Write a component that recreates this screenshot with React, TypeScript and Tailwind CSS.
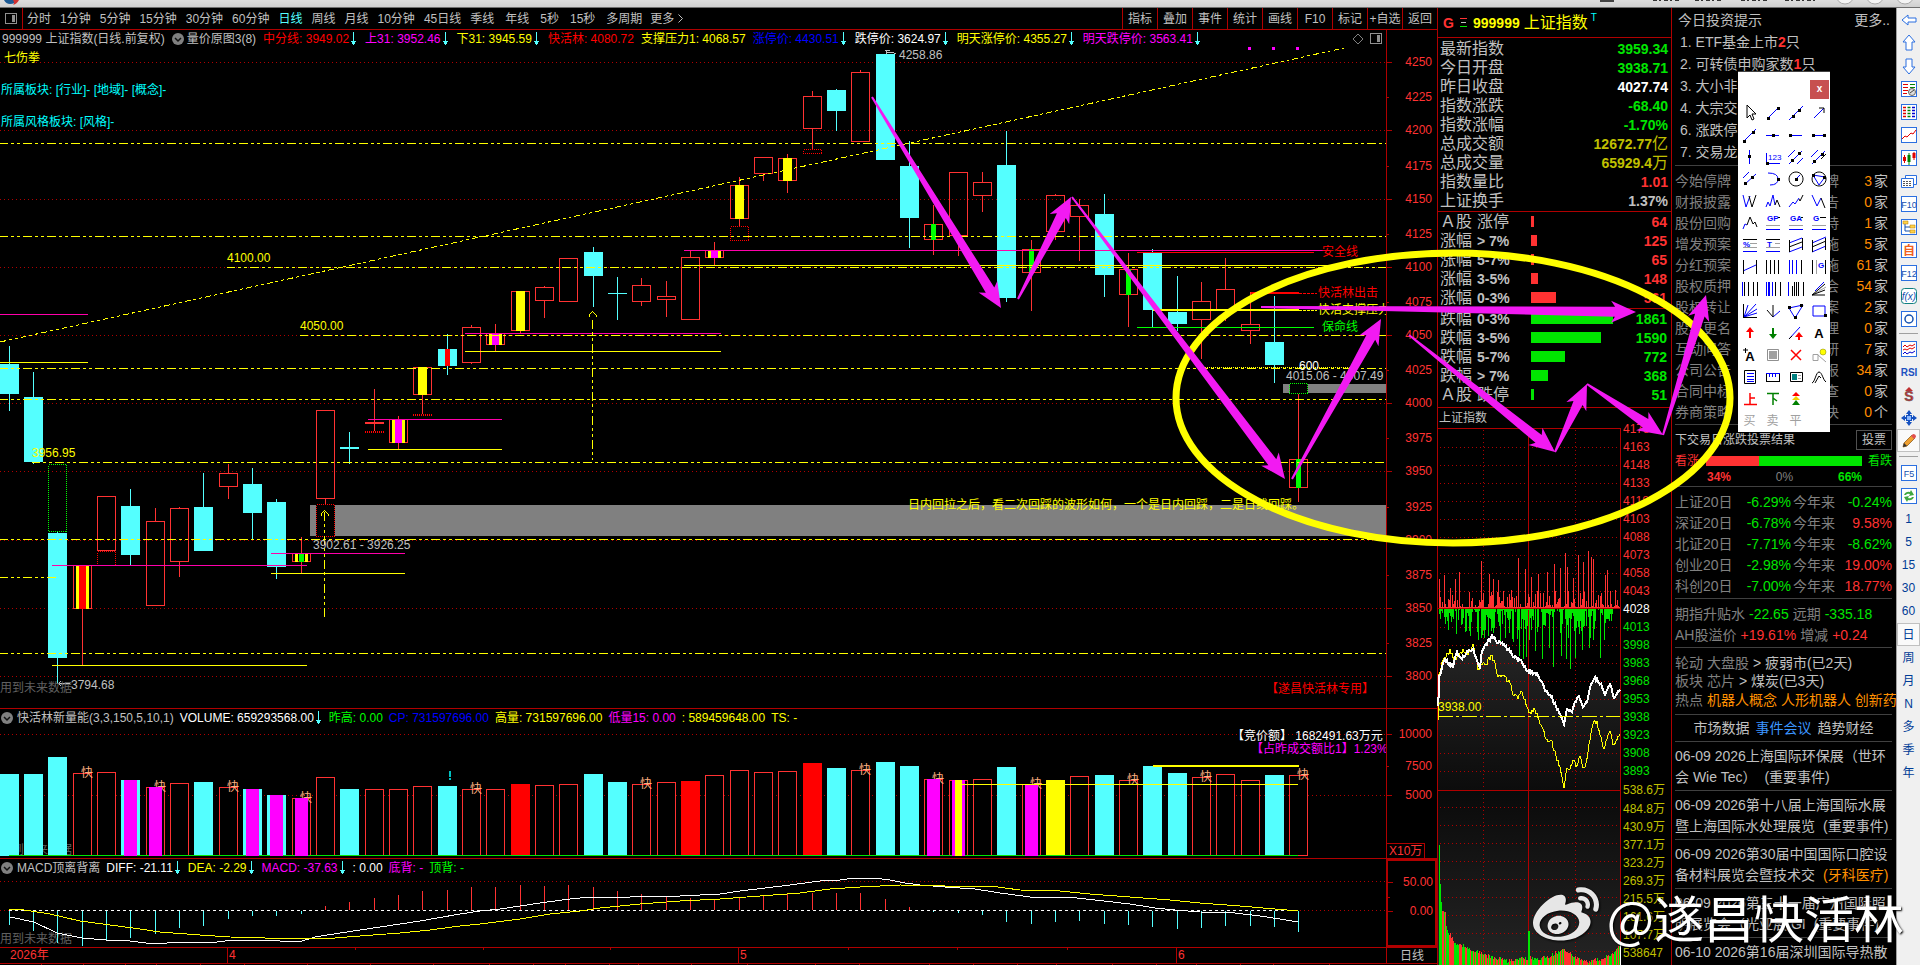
import type { ReactNode } from "react";
import { FaWeibo } from "react-icons/fa";

const FONT = "font-['Liberation_Sans','Noto_Sans_CJK_SC',sans-serif]";

const RED = "#ff3232";
const GRID = "#b00000";
const CYAN = "#54ffff";
const YELLOW = "#ffff00";
const MAGENTA = "#ff00ff";
const PINK = "#ff00aa";
const GREEN = "#00ff00";

// left edge of the i-th bar
const barX = (i: number) => Math.floor(i * 24.3333 + 0.1);

const noise = (n: number) => {
  const v = Math.sin(n * 127.1) * 43758.5453;
  return v - Math.floor(v);
};

type Inner = [color: string, from: number, to: number];
type Candle = {
  t: "c" | "r";
  o: number;
  c: number;
  h?: number;
  l?: number;
  inner?: Inner[];
};

const YMY: Inner[] = [[YELLOW, 3, 16], [MAGENTA, 6, 13]];
const YEL: Inner[] = [[YELLOW, 5, 14]];
const GRN: Inner[] = [[GREEN, 7, 12]];

const candles: Candle[] = [
  { t: "c", o: 364, c: 394, h: 346, l: 411 },
  { t: "c", o: 397, c: 462, h: 372, l: 464 },
  { t: "c", o: 533, c: 658, h: 531, l: 684 },
  { t: "r", o: 565, c: 609, l: 665, inner: [[YELLOW, 3, 16], ["#ff0000", 6, 13]] },
  { t: "r", o: 496, c: 551 },
  { t: "c", o: 506, c: 555, h: 489, l: 565 },
  { t: "r", o: 521, c: 606, h: 508 },
  { t: "r", o: 508, c: 562, h: 507, l: 577 },
  { t: "c", o: 507, c: 551, h: 473 },
  { t: "r", o: 473, c: 487, h: 464, l: 499 },
  { t: "c", o: 484, c: 513, h: 468, l: 540 },
  { t: "c", o: 502, c: 567, h: 499, l: 579 },
  { t: "r", o: 553, c: 562, h: 537, l: 573, inner: [[YELLOW, 3, 6], [GREEN, 7, 12], [YELLOW, 13, 16]] },
  { t: "r", o: 410, c: 499, l: 504 },
  { t: "c", o: 447, c: 449, h: 432, l: 464 },
  { t: "r", o: 422, c: 424, h: 389, l: 431 },
  { t: "r", o: 419, c: 443, h: 416, l: 449, inner: YMY },
  { t: "r", o: 367, c: 395, l: 414, inner: YEL },
  { t: "c", o: 349, c: 366, h: 334, l: 375, inner: [["#ff0000", 7, 12]] },
  { t: "r", o: 327, c: 363, h: 325, l: 364 },
  { t: "r", o: 333, c: 345, h: 324, l: 351, inner: YMY },
  { t: "r", o: 291, c: 331, l: 333, inner: YEL },
  { t: "r", o: 287, c: 301, h: 286, l: 318 },
  { t: "r", o: 258, c: 302 },
  { t: "c", o: 252, c: 276, h: 247, l: 307 },
  { t: "c", o: 293, c: 294, h: 277, l: 320 },
  { t: "r", o: 285, c: 302, h: 278, l: 306 },
  { t: "r", o: 296, c: 300, h: 281, l: 317 },
  { t: "r", o: 257, c: 320, h: 250 },
  { t: "r", o: 250, c: 258, h: 242, l: 265, inner: YMY },
  { t: "r", o: 185, c: 219, h: 177, l: 226, inner: YEL },
  { t: "r", o: 157, c: 174, l: 181 },
  { t: "r", o: 158, c: 181, h: 154, l: 193, inner: YEL },
  { t: "r", o: 96, c: 129, h: 91, l: 149 },
  { t: "c", o: 90, c: 111, h: 89, l: 131 },
  { t: "r", o: 72, c: 142, h: 70 },
  { t: "c", o: 54, c: 160 },
  { t: "c", o: 166, c: 218, h: 141, l: 248 },
  { t: "r", o: 224, c: 240, h: 205, l: 255, inner: GRN },
  { t: "r", o: 172, c: 236, l: 256 },
  { t: "r", o: 182, c: 196, h: 172, l: 212 },
  { t: "c", o: 165, c: 298, h: 131, l: 302 },
  { t: "r", o: 249, c: 273, h: 240, l: 311, inner: GRN },
  { t: "r", o: 195, c: 232, h: 194, l: 240 },
  { t: "r", o: 205, c: 217, h: 199, l: 261 },
  { t: "c", o: 214, c: 275, h: 194, l: 297 },
  { t: "r", o: 269, c: 295, h: 253, l: 327, inner: GRN },
  { t: "c", o: 253, c: 310, h: 249, l: 327 },
  { t: "c", o: 312, c: 324, h: 276, l: 331 },
  { t: "r", o: 301, c: 320, h: 282, l: 359 },
  { t: "r", o: 289, c: 311, h: 258, l: 321 },
  { t: "r", o: 324, c: 331, h: 292, l: 344 },
  { t: "c", o: 342, c: 365, h: 296, l: 383 },
  { t: "r", o: 459, c: 488, h: 394, l: 502, inner: GRN },
];

// kind: c cyan, r hollow, R red, Y yellow; m adds the magenta core
const volumes: [string, number][] = [
  ["c", 774], ["c", 774], ["c", 757], ["r", 773], ["r", 772], ["cm", 780], ["rm", 787], ["r", 783], ["c", 782],
  ["r", 787], ["cm", 789], ["cm", 795], ["rm", 798], ["r", 777], ["c", 789], ["r", 789], ["r", 789], ["r", 786],
  ["c", 786], ["r", 789], ["r", 789], ["R", 784], ["r", 785], ["r", 784], ["c", 774], ["c", 782], ["r", 784],
  ["r", 782], ["R", 781], ["r", 775], ["r", 770], ["r", 772], ["r", 771], ["R", 763], ["c", 768], ["r", 770],
  ["c", 762], ["c", 766], ["rm", 779], ["rmy", 780], ["r", 779], ["c", 767], ["rm", 784], ["Y", 780], ["r", 776],
  ["c", 775], ["r", 780], ["c", 766], ["c", 773], ["r", 777], ["r", 774], ["r", 780], ["c", 775], ["r", 775],
];

const quickMarks: [number, number][] = [
  [81, 773], [154, 787], [227, 787], [300, 798], [470, 789], [640, 784],
  [859, 770], [932, 779], [1030, 784], [1127, 780], [1200, 777], [1297, 775],
];

const macdEnds = [
  925, 931, 943, 946, 940, 938, 934, 928, 926, 919, 916, 916, 914, 906, 902, 898, 895, 891, 890, 887, 887, 885, 886,
  885, 887, 891, 894, 897, 898, 899, 897, 895, 894, 893, 893, 893, 899, 907, 912, 913, 915, 922, 924, 922, 921, 924,
  925, 927, 929, 928, 926, 926, 927, 932,
];

const diffLine =
  "10,917 34,922 57,933 82,938 106,940 130,941 146,943 167,943 180,942 210,943 225,941 250,940 280,941 302,941 315,937 340,933 380,927 420,921 460,914 480,911 500,909 540,903 570,899 590,897 630,897 640,896 680,896 720,894 740,891 790,885 820,881 840,880 855,878 873,878 890,880 905,883 920,885 945,887 960,888 975,889 1000,893 1030,897 1068,897 1095,900 1130,904 1155,908 1175,910 1200,912 1235,913 1260,916 1280,919 1298,922";
const deaLine =
  "9,909 24,910 50,914 80,921 110,925 140,929 160,932 200,935 230,937 265,938 335,938 360,936 400,933 430,930 460,926 480,924 520,919 550,914 580,911 600,908 640,904 680,901 720,899 760,896 800,893 830,889 860,887 900,885 945,886 990,886 1020,890 1060,891 1090,894 1130,897 1170,900 1200,903 1240,906 1275,909 1298,911";

function Label({ x, y, fill, children, end }: { x: number; y: number; fill: string; children: ReactNode; end?: boolean }) {
  return (
    <text x={x} y={y + 4} fill={fill} fontSize={12} textAnchor={end ? "end" : "start"} xmlSpace="preserve">
      {children}
    </text>
  );
}

function HLine({ x1, x2, y, color, h = 1 }: { x1: number; x2: number; y: number; color: string; h?: number }) {
  return <rect x={x1} y={y} width={x2 - x1} height={h} fill={color} />;
}

function Dotted({ y, x1 = 0, x2 = 1386 }: { y: number; x1?: number; x2?: number }) {
  return <line x1={x1} x2={x2} y1={y + 0.5} y2={y + 0.5} stroke={GRID} strokeDasharray="1 3" />;
}

function DashDot({ y, x1 = 0, x2 = 1386 }: { y: number; x1?: number; x2?: number }) {
  return <line x1={x1} x2={x2} y1={y + 0.5} y2={y + 0.5} stroke={YELLOW} strokeDasharray="9 3 3 3 3 3" strokeDashoffset={1} />;
}

function DownArrow() {
  return (
    <svg className="ml-[2px] mr-[2px] h-[13px] w-[5px] shrink-0" viewBox="0 0 5 13" shapeRendering="crispEdges">
      <path d="M2 0h1v13h-1zM0 9h5v1h-5zM1 10h3v2h-3z" fill={CYAN} />
    </svg>
  );
}

function Chevron() {
  return (
    <svg className="h-3 w-3 shrink-0" viewBox="0 0 12 12">
      <circle cx="6" cy="6" r="6" fill="#808080" />
      <path d="M3 5l3 3 3-3" fill="none" stroke="#111" strokeWidth="1.5" />
    </svg>
  );
}

function Field({ color, arrow, children }: { color: string; arrow?: boolean; children: ReactNode }) {
  return (
    <span className="flex shrink-0 items-center whitespace-pre" style={{ color }}>
      {children}
      {arrow && <DownArrow />}
    </span>
  );
}

function PanelIcon() {
  return (
    <svg className="h-[11px] w-3" viewBox="0 0 12 11" shapeRendering="crispEdges">
      <rect x="0.5" y="0.5" width="11" height="10" rx="1" fill="none" stroke="#909090" />
      <path d="M7 2h3v7H7z" fill="#909090" />
    </svg>
  );
}

const periodsA = ["分时", "1分钟", "5分钟", "15分钟", "30分钟", "60分钟", "日线", "周线", "月线", "10分钟", "45日线"];
const periodsB = ["季线", "年线", "5秒", "15秒", "多周期"];
const tools = ["指标", "叠加", "事件", "统计", "画线", "F10", "标记", "+自选", "返回"];

function Toolbar() {
  return (
    <nav className="flex h-[22px] shrink-0 items-center border-b border-[#b00000] text-[#c0c0c0]">
      <button className="flex h-full w-[23px] items-center justify-center border-r border-[#b00000]" aria-label="侧栏">
        <PanelIcon />
      </button>
      <div className="flex gap-[9px] pl-1">
        {periodsA.map((p) => (
          <button key={p} className={p === "日线" ? "text-[#54ffff]" : ""}>{p}</button>
        ))}
      </div>
      <div className="flex gap-[11px] pl-[9px]">
        {periodsB.map((p) => (
          <button key={p}>{p}</button>
        ))}
      </div>
      <button className="flex items-center gap-1 pl-2">
        更多
        <svg className="h-[9px] w-[5px]" viewBox="0 0 5 9"><path d="M.5 .5l4 4-4 4" fill="none" stroke="#c0c0c0" /></svg>
      </button>
      <div className="ml-auto flex h-full">
        {tools.map((t) => (
          <button key={t} className="w-[35px] whitespace-nowrap border-l border-[#b00000] text-center">{t}</button>
        ))}
      </div>
    </nav>
  );
}

function MainChart() {
  return (
    <svg className="block w-full flex-1" shapeRendering="crispEdges">
      <g transform="translate(0,-47)">
        {[62, 130, 199, 267, 335, 403, 471, 540, 608, 676].map((y) => <Dotted key={y} y={y} />)}
        <rect x={310} y={505} width={1076} height={31} fill="#808080" />
        <rect x={1283} y={384} width={103} height={9} fill="#808080" />
        <rect x={316} y={504} width={19} height={33} fill="#000" />

        {candles.map((k, i) => {
          const x = barX(i);
          const top = k.h ?? k.o;
          const low = k.l ?? k.c;
          const color = k.t === "c" ? CYAN : RED;
          return (
            <g key={i}>
              <rect x={x + 9} y={top} width={1} height={k.o - top} fill={color} />
              <rect x={x + 9} y={k.c} width={1} height={low - k.c} fill={color} />
              {k.t === "c" ? (
                <rect x={x} y={k.o} width={19} height={k.c - k.o} fill={color} />
              ) : (
                <rect x={x + 0.5} y={k.o + 0.5} width={18} height={k.c - k.o - 1} fill="none" stroke={color} />
              )}
              {k.c - k.o < 3 && <rect x={x + 9} y={top} width={1} height={low - top} fill={color} />}
              {k.inner?.map(([c, a, b]) => (
                <rect key={c + a} x={x + a} y={k.o} width={b - a} height={k.c - k.o} fill={c} />
              ))}
            </g>
          );
        })}

        {/* gap boxes */}
        <g fill="none" strokeDasharray="1 1">
          <rect x={48.5} y={464.5} width={18} height={67} stroke={GREEN} />
          <rect x={1289.5} y={383.5} width={18} height={10} fill="#000" stroke={GREEN} />
          <g stroke="#ff0000">
            <rect x={97.5} y={551.5} width={18} height={14} />
            <rect x={316.5} y={504.5} width={18} height={32} />
            <rect x={730.5} y={226.5} width={18} height={14} />
            <rect x={803.5} y={149.5} width={18} height={4} />
            <path d="M365 431.5h19M365 432.5h19M413 414.5h19M413 415.5h19" />
          </g>
        </g>

        {[143, 236, 368, 399, 539, 653].map((y) => <DashDot key={y} y={y} />)}
        <DashDot y={267} x1={227} />
        <DashDot y={335} x1={300} />
        <DashDot y={462} x1={32} />
        <DashDot y={577} x2={56} />
        <path d="M0 342L1344 48" stroke={YELLOW} strokeDasharray="6 3 3 3 3 3" fill="none" />

        {[[0, 88, 314], [684, 1330, 250], [52, 307, 565], [271, 405, 553], [368, 502, 419], [465, 721, 333]].map(([a, b, y]) => (
          <HLine key={y} x1={a} x2={b} y={y} color={PINK} />
        ))}
        {[[0, 88, 362], [684, 1340, 265], [52, 307, 665], [271, 405, 573], [368, 502, 449], [465, 721, 351]].map(([a, b, y]) => (
          <HLine key={y} x1={a} x2={b} y={y} color={YELLOW} />
        ))}
        <HLine x1={1137} x2={1314} y={252} color="#ff0000" />
        <HLine x1={1251} x2={1299} y={292} h={2} color="#ff0000" />
        <HLine x1={1153} x2={1299} y={309} h={2} color={YELLOW} />
        <HLine x1={1137} x2={1314} y={327} color={GREEN} />
        <path d="M1299 293.5h18" stroke="#ff0000" strokeDasharray="3 1" />
        <path d="M1299 310.5h18" stroke={YELLOW} strokeDasharray="3 1" />
        <path d="M1205 367.5h145" stroke={YELLOW} strokeDasharray="1 1" />
        <path d="M324.5 512v108M592.5 320v140" stroke={YELLOW} strokeDasharray="9 3 3 3 3 3" />
        <path d="M321 516v-2l3.500-3.500 3.500 3.500v2M589 317v-2l3.500-3.500 3.500 3.500v2" stroke={YELLOW} fill="none" />
        {[1248, 1272, 1296].map((x) => <rect key={x} x={x} y={47} width={3} height={3} fill={MAGENTA} />)}
        <path d="M885 50h5M886 50v4M886 52h6l4 2M58 683.500h12M58 683.500l3-2M58 683.500l3 2" stroke="#c0c0c0" fill="none" />

        <Label x={4} y={58} fill={YELLOW}>七伤拳</Label>
        <Label x={1} y={90} fill="#00ffff">所属板块: [行业]- [地域]- [概念]-</Label>
        <Label x={1} y={122} fill="#00ffff">所属风格板块: [风格]-</Label>
        <Label x={227} y={258} fill={YELLOW}>4100.00</Label>
        <Label x={300} y={326} fill={YELLOW}>4050.00</Label>
        <Label x={32} y={453} fill={YELLOW}>3956.95</Label>
        <Label x={313} y={545} fill="#c0c0c0">3902.61 - 3926.25</Label>
        <Label x={899} y={55} fill="#c0c0c0">4258.86</Label>
        <Label x={71} y={685} fill="#c0c0c0">3794.68</Label>
        <Label x={0} y={688} fill="#606060">用到未来数据</Label>
        <Label x={1322} y={252} fill="#ff0000">安全线</Label>
        <Label x={1318} y={293} fill="#ff0000">快活林出击</Label>
        <Label x={1318} y={310} fill={YELLOW}>快活支撑压力</Label>
        <Label x={1322} y={327} fill={GREEN}>保命线</Label>
        <Label x={1299} y={366} fill="#ffffff">600</Label>
        <Label x={1286} y={376} fill="#c0c0c0">4015.06 - 4007.49</Label>
        <Label x={908} y={505} fill={YELLOW}>日内回拉之后，看二次回踩的波形如何，一个是日内回踩，二是日线回踩。</Label>
        <Label x={1266} y={689} fill="#ff0000">【遂昌快活林专用】</Label>
      </g>
    </svg>
  );
}

function Axis({ from, ticks }: { from: number; ticks: [string, number][] }) {
  return (
    <svg className="block h-full w-full" shapeRendering="crispEdges">
      <g transform={`translate(0,${-from})`}>
        {ticks.map(([t, y], i) => (
          <g key={t}>
            <rect x={0} y={y} width={i % 2 ? 2 : 5} height={1} fill={GRID} />
            <Label x={45} y={y} fill={RED} end>{t}</Label>
          </g>
        ))}
      </g>
    </svg>
  );
}

const priceTicks: [string, number][] = [
  ["4250", 62], ["4225", 97], ["4200", 130], ["4175", 166], ["4150", 199], ["4125", 234], ["4100", 267], ["4075", 302],
  ["4050", 335], ["4025", 370], ["4000", 403], ["3975", 438], ["3950", 471], ["3925", 507], ["3900", 540],
  ["3875", 575], ["3850", 608], ["3825", 643], ["3800", 676],
];

function PricePanel() {
  return (
    <section className="flex min-h-0 flex-1 border-b border-[#b00000]">
      <div className="flex min-w-0 flex-1 flex-col overflow-hidden">
        <header className="flex h-[17px] items-center gap-[7px] overflow-hidden pl-[2px] pr-1">
          <Field color="#c0c0c0">999999 上证指数(日线.前复权)</Field>
          <span className="flex shrink-0 items-center gap-[3px] text-[#c0c0c0]"><Chevron />量价原图3(8)</span>
          <Field color="#ff0000" arrow>中分线: 3949.02</Field>
          <Field color={MAGENTA} arrow>上31: 3952.46</Field>
          <Field color={YELLOW} arrow>下31: 3945.59</Field>
          <Field color="#ff0000">快活林: 4080.72</Field>
          <Field color={YELLOW}>支撑压力1: 4068.57</Field>
          <Field color="#0000ff" arrow>涨停价: 4430.51</Field>
          <Field color="#ffffff" arrow>跌停价: 3624.97</Field>
          <Field color={YELLOW} arrow>明天涨停价: 4355.27</Field>
          <Field color={MAGENTA} arrow>明天跌停价: 3563.41</Field>
          <span className="ml-auto flex items-center gap-[6px]">
            <svg className="h-3 w-3" viewBox="0 0 12 12"><path d="M6 1l5 5-5 5-5-5z" fill="none" stroke="#808080" /></svg>
            <PanelIcon />
          </span>
        </header>
        <MainChart />
      </div>
      <div className="w-[51px] border-l border-[#b00000]"><Axis from={30} ticks={priceTicks} /></div>
    </section>
  );
}

function VolumePanel() {
  return (
    <section className="flex h-[150px] shrink-0 border-b border-[#b00000]">
      <div className="flex min-w-0 flex-1 flex-col overflow-hidden">
        <header className="flex h-[17px] items-center gap-[6px] pl-px">
          <span className="flex shrink-0 items-center gap-1 text-[#c0c0c0]"><Chevron />快活林新量能(3,3,150,5,10,1)</span>
          <Field color="#ffffff" arrow>VOLUME: 659293568.00</Field>
          <Field color={GREEN}>昨高: 0.00</Field>
          <Field color="#0000ff">CP: 731597696.00</Field>
          <Field color={YELLOW}>高量: 731597696.00</Field>
          <Field color={MAGENTA}>低量15: 0.00</Field>
          <Field color={YELLOW}>: 589459648.00</Field>
          <Field color={YELLOW}>TS: -</Field>
        </header>
        <svg className="block w-full flex-1" shapeRendering="crispEdges">
          <g transform="translate(0,-726)">
            <Dotted y={734} />
            <Dotted y={795} />
            <Label x={0} y={850} fill="#606060">用到未来数据</Label>
            {volumes.map(([k, y], i) => {
              const fill = { c: CYAN, R: "#ff0000", Y: YELLOW }[k[0]];
              return fill ? (
                <rect key={i} x={barX(i)} y={y} width={19} height={856 - y} fill={fill} />
              ) : (
                <rect key={i} x={barX(i) + 0.5} y={y + 0.5} width={18} height={855 - y} fill="#000" stroke={RED} />
              );
            })}
            <HLine x1={9} x2={1298} y={855} color="#00e600" />
            {quickMarks.map(([x, y]) => <Label key={x} x={x} y={y} fill="#ffb080">快</Label>)}
            {volumes.map(([k, y], i) => k.includes("m") && (
              <rect key={i} x={barX(i) + 3} y={y} width={13} height={856 - y} fill={MAGENTA} />
            ))}
            <rect x={955} y={780} width={7} height={76} fill={YELLOW} />
            <path d="M449 771h2v6h-2zM449 778h2v2h-2z" fill="#00c0c0" />
            <HLine x1={955} x2={1298} y={784} color={YELLOW} />
            <HLine x1={1153} x2={1299} y={765} h={2} color={YELLOW} />
            <Label x={1232} y={736} fill="#ffffff">【竞价额】 1682491.63万元</Label>
            <Label x={1251} y={749} fill={MAGENTA}>【占昨成交额比1】1.23%</Label>
          </g>
        </svg>
      </div>
      <div className="flex w-[51px] flex-col border-l border-[#b00000]">
        <div className="min-h-0 flex-1"><Axis from={709} ticks={[["10000", 734], ["7500", 766], ["5000", 795]]} /></div>
        <div className="mr-auto flex h-[15px] items-center border-t border-r border-[#b00000] px-[2px] text-[#ff3232]">X10万</div>
      </div>
    </section>
  );
}

function MacdPanel() {
  return (
    <section className="flex h-[89px] shrink-0 border-b border-[#b00000]">
      <div className="flex min-w-0 flex-1 flex-col overflow-hidden">
        <header className="flex h-[17px] items-center gap-[6px] pl-px">
          <span className="flex shrink-0 items-center gap-1 text-[#c0c0c0]"><Chevron />MACD顶离背离</span>
          <Field color="#ffffff" arrow>DIFF: -21.11</Field>
          <Field color={YELLOW} arrow>DEA: -2.29</Field>
          <Field color={MAGENTA} arrow>MACD: -37.63</Field>
          <Field color="#ffffff">: 0.00</Field>
          <Field color={MAGENTA}>底背: -</Field>
          <Field color={GREEN}>顶背: -</Field>
        </header>
        <svg className="block w-full flex-1" shapeRendering="crispEdges">
          <g transform="translate(0,-876)">
            <Dotted y={881} />
            <Dotted y={910} x2={9} />
            <Dotted y={910} x1={1300} />
            <Label x={0} y={939} fill="#606060">用到未来数据</Label>
            {macdEnds.map((y, i) => {
              const x = barX(i) + 9;
              return y < 910 ? (
                <rect key={i} x={x} y={y} width={1} height={910 - y} fill={RED} />
              ) : (
                <rect key={i} x={x} y={911} width={1} height={y - 911} fill={CYAN} />
              );
            })}
            <path d="M9 910.500H1298" stroke="#ffffff" strokeDasharray="3 3" />
            <polyline points={diffLine} stroke="#ffffff" fill="none" />
            <polyline points={deaLine} stroke={YELLOW} fill="none" />
          </g>
        </svg>
      </div>
      <div className="w-[51px] border-2 border-[#b00000]">
        <Axis from={860} ticks={[["50.00", 881], ["", 896], ["0.00", 910]]} />
      </div>
    </section>
  );
}

function DateAxis() {
  return (
    <footer className="flex h-[17px] shrink-0">
      <svg className="block h-full min-w-0 flex-1" shapeRendering="crispEdges">
        <g transform="translate(0,-948)">
          <Label x={10} y={955} fill={RED}>2026年</Label>
          {([["4", 227], ["5", 738], ["6", 1176]] as [string, number][]).map(([t, x]) => (
            <g key={t}>
              <rect x={x} y={948} width={1} height={15} fill={GRID} />
              <Label x={x + 2} y={955} fill={RED}>{t}</Label>
            </g>
          ))}
          {[355, 483, 610, 848, 957, 1067].map((x) => <rect key={x} x={x} y={948} width={1} height={2} fill={GRID} />)}
          <HLine x1={0} x2={1387} y={963} color={GRID} />
          {[41, 83, 125, 156, 200, 244, 307, 370, 433, 489, 533, 565, 609, 638, 691, 747, 815, 859, 929, 973, 1017, 1056, 1112, 1156, 1196, 1240, 1273, 1329].map((x) => (
            <rect key={x} x={x} y={964} width={1} height={1} fill={GRID} />
          ))}
        </g>
      </svg>
      <div className="mb-px flex w-[51px] items-center justify-center border-b border-l border-[#b00000] text-[#c0c0c0]">日线</div>
    </footer>
  );
}

const quotes: [string, string, string, string?][] = [
  ["最新指数", "3959.34", "text-[#00e600]"],
  ["今日开盘", "3938.71", "text-[#00e600]"],
  ["昨日收盘", "4027.74", "text-white"],
  ["指数涨跌", "-68.40", "text-[#00e600]"],
  ["指数涨幅", "-1.70%", "text-[#00e600]"],
  ["总成交额", "12672.77", "text-[#c0c000]", "亿"],
  ["总成交量", "65929.4", "text-[#c0c000]", "万"],
  ["指数量比", "1.01", "text-[#ff3232]"],
  ["上证换手", "1.37%", "text-[#c0c0c0]"],
];

const breadth: [string, string, number, number][] = [
  ["Ａ股", "涨停", 3, 64],
  ["涨幅", "> 7%", 6, 125],
  ["涨幅", "5-7%", 3, 65],
  ["涨幅", "3-5%", 7, 148],
  ["涨幅", "0-3%", 25, 561],
  ["跌幅", "0-3%", 82, 1861],
  ["跌幅", "3-5%", 70, 1590],
  ["跌幅", "5-7%", 34, 772],
  ["跌幅", "> 7%", 17, 368],
  ["Ａ股", "跌停", 3, 51],
];

function Breadth({ rows, up }: { rows: typeof breadth; up?: boolean }) {
  return (
    <>
      {rows.map(([a, b, w, n]) => (
        <div key={a + b} className="flex h-[19px] items-center pl-[2px] pr-1">
          <span className="flex w-[91px] items-center gap-[5px] whitespace-nowrap text-[16px] text-[#c0c0c0]">
            {a}
            <b className={/\d/.test(b) ? "text-[14px]" : "font-normal"}>{b}</b>
          </span>
          <span className={`h-[11px] ${up ? "bg-[#ff3232]" : "bg-[#00e600]"}`} style={{ width: w }} />
          <b className={`ml-auto text-[14px] ${up ? "text-[#ff3232]" : "text-[#00e600]"}`}>{n}</b>
        </div>
      ))}
    </>
  );
}

const scale = (pts: [number, number][]) => pts.map(([x, y]) => [1430 + x / 3, 644 + y / 3] as [number, number]);
const indexPts = scale([
  [25, 185], [26, 100], [35, 75], [45, 45], [55, 60], [70, 65], [80, 25], [90, 45], [100, 40], [115, 20], [130, 15],
  [140, 50], [150, 70], [155, 20], [165, 5], [175, -8], [188, -26], [205, -4], [215, -2], [235, 15], [250, 35],
  [270, 50], [290, 75], [300, 85], [325, 90], [345, 140], [360, 150], [375, 180], [390, 210], [402, 245], [410, 195],
  [425, 205], [430, 185], [445, 155], [460, 190], [470, 175], [480, 130], [495, 105], [515, 120], [525, 155],
  [540, 120], [552, 158], [572, 140],
]);
const avgPts = scale([
  [25, 228], [27, 90], [35, 60], [45, 40], [60, 20], [75, 50], [100, 20], [115, 30], [130, -2], [145, 80], [160, 50],
  [165, 65], [185, 35], [195, 55], [205, 100], [220, 95], [240, 115], [250, 150], [265, 160], [275, 145], [290, 180],
  [300, 212], [312, 195], [325, 215], [335, 250], [350, 290], [362, 285], [375, 325], [390, 370], [402, 438],
  [410, 370], [420, 380], [430, 340], [440, 370], [450, 335], [460, 375], [467, 370], [475, 310], [490, 240],
  [500, 235], [510, 265], [522, 315], [540, 260], [550, 300], [572, 275],
]);
const volPts = scale([
  [25, 485], [28, 660], [31, 750], [35, 800], [45, 805], [50, 855], [60, 865], [75, 895], [100, 900], [130, 915],
  [155, 920], [170, 930], [200, 935], [230, 945], [260, 940], [280, 935], [310, 938], [340, 935], [360, 930],
  [375, 920], [402, 912], [430, 930], [460, 945], [490, 945], [520, 935], [540, 930], [555, 910], [570, 900],
]);

function at(pts: [number, number][], x: number) {
  const i = pts.findIndex((p) => p[0] >= x);
  if (i <= 0) return pts[0][1];
  const [x0, y0] = pts[i - 1];
  const [x1, y1] = pts[i];
  return y0 + ((y1 - y0) * (x - x0)) / (x1 - x0);
}

function jag(pts: [number, number][], amp: number) {
  const out: string[] = [`${pts[0][0]},${pts[0][1]}`];
  for (let x = 1439; x <= 1620; x++) {
    out.push(`${x},${(at(pts, x) + (noise(x) - 0.5) * amp).toFixed(1)}`);
  }
  return out.join(" ");
}

const redPeaks: Record<number, number> = {
  1439: 579, 1444: 575, 1450: 588, 1455: 579, 1459: 572, 1469: 592, 1481: 561, 1489: 574, 1493: 579, 1498: 580,
  1507: 597, 1512: 597, 1518: 558, 1525: 569, 1531: 577, 1538: 574, 1547: 572, 1554: 564, 1560: 568, 1565: 553,
  1567: 567, 1573: 578, 1578: 555, 1583: 562, 1588: 551, 1591: 557, 1593: 559, 1605: 575, 1607: 570, 1615: 590,
};
const greenPeaks: Record<number, number> = {
  1440: 619, 1448: 630, 1456: 634, 1465: 632, 1470: 636, 1478: 640, 1484: 638, 1492: 628, 1500: 641, 1505: 638,
  1513: 642, 1519: 656, 1523: 659, 1526: 657, 1535: 651, 1542: 659, 1549: 648, 1553: 667, 1561: 656, 1566: 659,
  1570: 669, 1575: 658, 1582: 650, 1589: 648, 1600: 658, 1604: 640,
};

const miniTicks: [string, number, string][] = [
  ["4178", 429, RED], ["4163", 447, RED], ["4148", 465, RED], ["4133", 483, RED], ["4118", 501, RED],
  ["4103", 519, RED], ["4088", 537, RED], ["4073", 555, RED], ["4058", 573, RED], ["4043", 591, RED],
  ["4028", 609, "#ffffff"], ["4013", 627, "#00e600"], ["3998", 645, "#00e600"], ["3983", 663, "#00e600"],
  ["3968", 681, "#00e600"], ["3953", 699, "#00e600"], ["3938", 717, "#00e600"], ["3923", 735, "#00e600"],
  ["3908", 753, "#00e600"], ["3893", 771, "#00e600"], ["538.6万", 790, "#c0c000"], ["484.8万", 809, "#c0c000"],
  ["430.9万", 827, "#c0c000"], ["377.1万", 845, "#c0c000"], ["323.2万", 863, "#c0c000"], ["269.3万", 881, "#c0c000"],
  ["215.5万", 899, "#c0c000"], ["161.6万", 917, "#c0c000"], ["107.7万", 935, "#c0c000"], ["538647", 953, "#c0c000"],
];

function IntradayChart() {
  const cols = Array.from({ length: 181 }, (_, i) => 1439 + i);
  return (
    <svg className="block min-h-0 w-full flex-1 overflow-visible" shapeRendering="crispEdges">
      <defs>
        <linearGradient id="area" x1="0" y1="0" x2="0" y2="1">
          <stop offset="0" stopColor="#262626" />
          <stop offset="1" stopColor="#0c0c0c" />
        </linearGradient>
        <linearGradient id="floor" x1="0" y1="0" x2="0" y2="1">
          <stop offset="0" stopColor="#0a0a0a" />
          <stop offset="1" stopColor="#242424" />
        </linearGradient>
      </defs>
      <g transform="translate(-1438,-428)">
        <polygon points={`${jag(indexPts, 3)} 1620,790 1438,790`} fill="url(#area)" />
        <rect x={1438} y={790} width={182} height={175} fill="url(#floor)" />
        {[447, 465, 483, 501, 519, 537, 555, 573, 591, 627, 645, 663, 681, 699, 735, 753, 771, 807, 825, 843, 861, 879, 897, 915, 933, 951].map((y) => (
          <Dotted key={y} y={y} x1={1440} x2={1620} />
        ))}
        <path d="M1483.500 430V965M1575.500 430V965" stroke={GRID} strokeDasharray="1 3" />
        <path d="M1438 428.500H1621M1438 608.500H1621M1438 790.500H1621M1528.500 428V965M1620.500 428V965" stroke={GRID} />
        {cols.map((x) => {
          const small = 607 - Math.floor(noise(x * 3) ** 4 * 18);
          const top = redPeaks[x] ?? small;
          return <rect key={x} x={x} y={top} width={1} height={608 - top} fill={RED} />;
        })}
        {cols.filter((x) => x < 1614).map((x) => {
          const small = 609 + Math.floor(noise(x * 7) ** 2 * (x > 1465 && x < 1600 ? 32 : 18));
          const end = greenPeaks[x] ?? small;
          return <rect key={x} x={x} y={609} width={1} height={end - 609} fill="#00e600" />;
        })}
        <polyline points={jag(avgPts, 5)} fill="none" stroke={YELLOW} />
        <polyline points={jag(indexPts, 4)} fill="none" stroke="#ffffff" strokeWidth={2} />
        <path d="M1438 716.500H1620" stroke={YELLOW} strokeDasharray="15 3 3 3" />
        <Label x={1438} y={707} fill={YELLOW}>3938.00</Label>
        {cols.filter((x) => x < 1620).map((x) => {
          const y = Math.round(at(volPts, x) + (x > 1445 ? noise(x) * 4 : 0));
          return <rect key={x} x={x} y={y} width={1} height={965 - y} fill={noise(x * 5) > 0.45 ? RED : "#00e600"} />;
        })}
        <rect x={1528} y={931} width={2} height={34} fill="#00e600" />
        <rect x={1620} y={944} width={1} height={21} fill="#ffffff" />
        {miniTicks.map(([t, y, c]) => <Label key={t} x={1623} y={y} fill={c}>{t}</Label>)}
      </g>
    </svg>
  );
}

function QuotePanel() {
  return (
    <section className="flex w-[235px] shrink-0 flex-col border-x border-[#b00000]">
      <header className="flex h-[30px] shrink-0 items-center border-b border-[#b00000] pl-[5px]">
        <b className="w-[17px] text-[14px] text-[#ff3232]">G</b>
        <svg className="mr-[6px] h-[9px] w-[7px]" viewBox="0 0 7 9" shapeRendering="crispEdges">
          <path d="M0 0h7v1H0z" fill={RED} />
          <path d="M1 4h5v1H1z" fill="#c0c0c0" />
          <path d="M0 8h7v1H0z" fill="#00e600" />
        </svg>
        <b className="text-[14px] text-[#ffff00]">999999</b>
        <h1 className="ml-1 text-[16px] text-[#ffff00]">上证指数</h1>
        <sup className="ml-[3px] text-[10px] text-[#00ffff]">T</sup>
      </header>
      <dl className="shrink-0 border-b border-[#b00000] py-px">
        {quotes.map(([k, v, c, unit]) => (
          <div key={k} className="flex h-[19px] items-center justify-between pl-[2px] pr-[3px]">
            <dt className="text-[16px] text-[#c0c0c0]">{k}</dt>
            <dd className={`flex items-center text-[14px] ${c}`}>
              <b>{v}</b>
              {unit && <span className="text-[16px]">{unit}</span>}
            </dd>
          </div>
        ))}
      </dl>
      <div className="shrink-0">
        <Breadth rows={breadth.slice(0, 5)} up />
        <div className="mt-px border-t border-[#b00000] pb-[3px]">
          <Breadth rows={breadth.slice(5)} />
        </div>
      </div>
      <h2 className="flex h-[21px] shrink-0 items-center border-t border-[#b00000] pl-px text-[#c0c0c0]">上证指数</h2>
      <IntradayChart />
    </section>
  );
}

const tips: [string, string?, string?][] = [
  ["1. ETF基金上市", "2", "只"],
  ["2. 可转债申购家数", "1", "只"],
  ["3. 大小非"],
  ["4. 大宗交"],
  ["6. 涨跌停"],
  ["7. 交易龙"],
];

const events: [string, string, number, string][] = [
  ["今始停牌", "牌", 3, "家"], ["财报披露", "告", 0, "家"], ["股份回购", "持", 1, "家"], ["增发预案", "施", 5, "家"],
  ["分红预案", "施", 61, "家"], ["股权质押", "会", 54, "家"], ["股权转让", "案", 2, "家"], ["股票更名", "理", 0, "家"],
  ["互动问答", "研", 7, "家"], ["公司公告", "报", 34, "家"], ["合同中标", "查", 0, "家"], ["券商策略", "决", 0, "个"],
];

const boards = [
  ["上证20日", "-6.29%", "-0.24%"],
  ["深证20日", "-6.78%", "9.58%"],
  ["北证20日", "-7.71%", "-8.62%"],
  ["创业20日", "-2.98%", "19.00%"],
  ["科创20日", "-7.00%", "18.77%"],
];

const news: [string, string, string?, string?][] = [
  ["06-09 2026上海国际环保展（世环", "会 Wie Tec）", "(重要事件)"],
  ["06-09 2026第十八届上海国际水展", "暨上海国际水处理展览", "(重要事件)"],
  ["06-09 2026第30届中国国际口腔设", "备材料展览会暨技术交", "(牙科医疗)", "hot"],
  ["06-09 2026第三十一届广州国际照", "明展览会（光亚展 GI", "(重要事件)"],
];

const tone = (v: string) => (v.startsWith("-") ? "text-[#00e600]" : "text-[#ff3232]");

function InfoPanel() {
  return (
    <aside className="flex w-[224px] shrink-0 flex-col overflow-hidden whitespace-nowrap pl-[3px] text-[14px] text-[#c0c0c0]">
      <header className="flex h-[23px] shrink-0 items-center justify-between pl-[3px] pr-[6px]">
        <h2>今日投资提示</h2>
        <a href="#more">更多..</a>
      </header>
      <ul className="mr-1 h-[135px] shrink-0 border-b border-[#404040] pl-[5px]">
        {tips.map(([t, n, u]) => (
          <li key={t} className="flex h-[22px] items-center">
            <a href="#tip">{t}{n && <b className="text-[#ff3232]">{n}</b>}{u}</a>
          </li>
        ))}
      </ul>
      <table className="mr-1 mt-1 w-[217px] shrink-0 table-fixed">
        <tbody>
          {events.map(([a, b, n, u]) => (
            <tr key={a} className="h-[21px]">
              <td className="w-[150px] p-0 text-[#808080]">{a}</td>
              <td className="w-[15px] p-0 text-[#808080]">{b}</td>
              <td className="p-0 text-right text-[#ff8c00]">{n}</td>
              <td className="w-[20px] p-0 pl-[2px]">{u}</td>
            </tr>
          ))}
        </tbody>
      </table>
      <div className="mr-1 mt-[2px] shrink-0 border-y border-[#404040] text-[12px]">
        <div className="flex h-[29px] items-center justify-between">
          <span>下交易日涨跌投票结果</span>
          <button className="h-[20px] w-[36px] border border-[#505050]">投票</button>
        </div>
        <div className="flex h-[14px] items-center">
          <span className="w-[31px] text-[#ff3232]">看涨</span>
          <span className="h-[10px] flex-[34] bg-[#ff3232]" />
          <span className="h-[10px] flex-[66] bg-[#00e600]" />
          <span className="w-[30px] text-right text-[#00e600]">看跌</span>
        </div>
        <div className="flex h-[18px] items-center justify-between pl-[32px] pr-[30px]">
          <b className="text-[#ff3232]">34%</b>
          <span className="text-[#808080]">0%</span>
          <b className="text-[#00e600]">66%</b>
        </div>
      </div>
      <table className="mr-1 mt-1 w-[217px] shrink-0 table-fixed">
        <tbody>
          {boards.map(([n, a, b]) => (
            <tr key={n} className="h-[21px]">
              <td className="w-[60px] p-0 text-[#808080]">{n}</td>
              <td className={`w-[56px] p-0 text-right ${tone(a)}`}>{a}</td>
              <td className="w-[46px] p-0 pl-[2px] text-[#808080]">今年来</td>
              <td className={`p-0 text-right ${tone(b)}`}>{b}</td>
            </tr>
          ))}
        </tbody>
      </table>
      <div className="mr-1 mt-[2px] h-[50px] shrink-0 border-y border-[#404040] pt-1 text-[#808080]">
        <p className="flex h-[21px] items-center gap-1">期指升贴水 <span className="text-[#00e600]">-22.65</span> 远期 <span className="text-[#00e600]">-335.18</span></p>
        <p className="flex h-[21px] items-center gap-1">AH股溢价 <span className="text-[#ff3232]">+19.61%</span> 增减 <span className="text-[#ff3232]">+0.24</span></p>
      </div>
      <div className="h-[66px] shrink-0 pt-[6px] text-[#808080]">
        <p className="flex h-[18px] items-center gap-1">轮动 大盘股 <a href="#weak" className="text-[#c0c0c0]">&gt; 疲弱市(已2天)</a></p>
        <p className="flex h-[18px] items-center gap-1">板块 芯片 <a href="#coal" className="text-[#c0c0c0]">&gt; 煤炭(已3天)</a></p>
        <p className="flex h-[20px] items-center gap-1">热点 <a href="#hot" className="text-[#ff9000]">机器人概念 人形机器人 创新药</a></p>
      </div>
      <nav className="mr-1 flex h-[28px] shrink-0 items-center justify-center gap-[6px] border-y border-[#404040]">
        <button>市场数据</button>
        <button className="text-[#3c96ff]">事件会议</button>
        <button>趋势财经</button>
      </nav>
      {news.map(([a, b, tag, hot]) => (
        <a key={a} href="#news" className="mr-1 block h-[49px] shrink-0 border-b border-[#404040] pt-1 leading-[21px]">
          {a}<br />
          {b}<span className={hot ? "ml-2 text-[#ff9000]" : "ml-2"}>{tag}</span>
        </a>
      ))}
      <a href="#news" className="block shrink-0 pt-1 leading-[21px]">06-10 2026第16届深圳国际导热散</a>
    </aside>
  );
}

const frame = <rect x="1.500" y="1.500" width="15" height="15" fill="#fff" stroke="#2b6fe0" />;
const F = ({ t }: { t: string }) => (
  <>
    {frame}
    <text x="9" y="13" fontSize="9" fill="#1450b0" textAnchor="middle">{t}</text>
  </>
);

const sideIcons: [string, ReactNode][] = [
  ["后退", <path d="M2 9l6-5v3h8v4H8v3z" fill="#fff" stroke="#2b6fe0" />],
  ["上移", <path d="M9 1l6 7h-3v8H6V8H3z" fill="#fff" stroke="#2b6fe0" />],
  ["下移", <path d="M9 17l6-7h-3V2H6v8H3z" fill="#fff" stroke="#2b6fe0" />],
  ["报表", <>{frame}<path d="M3 4.500h5M3 7.500h5M3 10.500h5M3 13.500h4" stroke="#e00000" /><path d="M10 4.500h5M10 7.500h5" stroke="#008000" /><circle cx="12" cy="12" r="3.500" fill="#ddd" stroke="#666" /><path d="M10 13l4-3" stroke="#444" /></>],
  ["列表", <>{frame}<path d="M3 4.500h3M3 7.500h3M3 10.500h3M3 13.500h3" stroke="#e00000" strokeWidth="1.500" /><path d="M7.500 4.500h3M7.500 7.500h3M7.500 10.500h3M7.500 13.500h3" stroke="#008000" strokeWidth="1.500" /><path d="M12 4.500h3M12 7.500h3M12 10.500h3M12 13.500h3" stroke="#0000d0" strokeWidth="1.500" /></>],
  ["走势", <>{frame}<path d="M2 13l3-3 2 1 4-4 2 1 3-4" fill="none" stroke="#e00000" /></>],
  ["K线", <>{frame}<path d="M4.500 6v8M14 3v8" stroke="#e00000" /><path d="M9 4v12" stroke="#008000" /><path d="M3 8h3v4H3zM12.500 4h3v5h-3z" fill="#e00000" /><path d="M7.500 6h3v7h-3z" fill="#008000" /></>],
  ["资讯", <><path d="M5.500 3.500h11v9h-11z" fill="#fff" stroke="#2b6fe0" /><path d="M1.500 6.500h12v9h-12z" fill="#fff" stroke="#2b6fe0" /><path d="M3 9.500h9M3 11.500h9M3 13.500h9" stroke="#555" strokeDasharray="2 1" /></>],
  ["F10", <F t="F10" />],
  ["结构", <>{frame}<path d="M5 5v8h5M5 9h5" fill="none" stroke="#1450b0" /><path d="M3 3h5v3H3zM10 7h5v3h-5zM10 12h5v3h-5z" fill="#ffd24a" stroke="#b07800" strokeWidth="0.500" /></>],
  ["自选", <>{frame}<text x="9" y="14" fontSize="12" fontWeight="bold" fill="#f06020" textAnchor="middle">自</text></>],
  ["F12", <F t="F12" />],
  ["公式", <><rect x="1.500" y="1.500" width="15" height="15" rx="3" fill="#fff" stroke="#108080" /><text x="9" y="13" fontSize="10" fontStyle="italic" fill="#1450b0" textAnchor="middle">f(x)</text></>],
  ["搜索", <>{frame}<circle cx="9" cy="9" r="4" fill="none" stroke="#1450b0" strokeWidth="1.500" /></>],
];

const sideIcons2: [string, ReactNode][] = [
  ["波形", <>{frame}<path d="M3 7l2-2 2 2 3-2 2 1 3-2M3 10l2-1 2 1 3-2 2 1 3-2" fill="none" stroke="#e00000" /><path d="M3 14l2-2 2 2 3-2 2 1 3-2" fill="none" stroke="#0000d0" /></>],
  ["RSI", <text x="9" y="13" fontSize="10" fontWeight="bold" fill="#2050c0" textAnchor="middle">RSI</text>],
  ["资金", <><path d="M9 1l4 4H5z" fill="#c03030" /><text x="9" y="15" fontSize="14" fontWeight="bold" fill="#c03030" stroke="#606060" strokeWidth="0.500" textAnchor="middle">S</text></>],
  ["移动", <><path d="M9 1l3 4H6zM9 17l3-4H6zM1 9l4-3v6zM17 9l-4-3v6z" fill="#1450c0" /><path d="M9 4v10M4 9h10" stroke="#1450c0" strokeWidth="2" /><rect x="6.500" y="6.500" width="5" height="5" fill="#8ab8ff" stroke="#1450c0" /></>],
  ["画线", <><path d="M3 15l1-4 8-8 3 3-8 8z" fill="#f0a030" stroke="#805010" strokeWidth="0.700" /><path d="M11 4l2-2q3 0 3 3l-2 2z" fill="#e05050" /><path d="M3 15l1-4 3 3z" fill="#333" /></>],
];

const minuteLabels = ["1", "5", "15", "30", "60"];
const periodLabels = ["日", "周", "月", "N", "多", "季", "年"];

function SideIcon({ name, children, on }: { name: string; children: ReactNode; on?: boolean }) {
  return (
    <button aria-label={name} className={`flex h-[23px] w-full shrink-0 items-center justify-center ${on ? "border border-[#c0c0c0] bg-[#fafafa]" : ""}`}>
      <svg className="h-[18px] w-[18px]" viewBox="0 0 18 18">{children}</svg>
    </button>
  );
}

function SideLabel({ t }: { t: string }) {
  return (
    <button className={`h-[23px] w-full shrink-0 text-[12px] text-[#003c96] ${t === "日" ? "border border-[#c0c0c0] bg-[#fafafa]" : ""}`}>{t}</button>
  );
}

function SideBar() {
  return (
    <nav className="flex w-[24px] shrink-0 flex-col items-center overflow-hidden border-l border-[#a0a0a0] bg-[#f0f0f0]">
      {sideIcons.map(([n, icon]) => <SideIcon key={n} name={n}>{icon}</SideIcon>)}
      <hr className="my-[3px] w-[19px] shrink-0 border-[#a0a0a0]" />
      {sideIcons2.map(([n, icon]) => <SideIcon key={n} name={n} on={n === "画线"}>{icon}</SideIcon>)}
      <hr className="my-1 w-[19px] shrink-0 border-[#a0a0a0]" />
      <SideIcon name="F5"><F t="F5" /></SideIcon>
      <SideIcon name="刷新">
        {frame}
        <path d="M4 8q2-4 6-3l1-2 3 5-5 1 1-2q-3-1-4 1zM14 10q-2 4-6 3l-1 2-3-5 5-1-1 2q3 1 4-1z" fill="#40a840" />
      </SideIcon>
      {minuteLabels.map((t) => <SideLabel key={t} t={t} />)}
      <div className="mt-px flex w-full flex-col">
        {periodLabels.map((t) => <SideLabel key={t} t={t} />)}
      </div>
    </nav>
  );
}

// drawing tools: b blue, k black, g grey, r red, e green strokes; d black handles
type Tool = { n: string; b?: string; k?: string; g?: string; r?: string; e?: string; d?: [number, number][]; x?: ReactNode };

const textTag = (t: string) => <text x="4" y="8" fontSize="8" fontWeight="bold" fill="#0000ff">{t}</text>;

const palette: Tool[] = [
  { n: "选择", x: <path d="M7 2v13l3-3 2 5 2-1-2-5h4z" fill="#fff" stroke="#000" /> },
  { n: "线段", b: "M5 15L15 5", d: [[5, 15], [15, 5]] },
  { n: "直线", b: "M3 17L17 3", d: [[7, 13], [13, 7]] },
  { n: "箭头", b: "M5 15L15 5", k: "M10 5h5v5" },
  { n: "射线", b: "M3 17L16 4", d: [[4, 16], [13, 7]] },
  { n: "水平线", b: "M3 10.500h13", d: [[10, 10]] },
  { n: "水平射线", b: "M4 10.500h12", d: [[4, 10]] },
  { n: "水平线段", b: "M4 10.500h12", d: [[4, 10], [15, 10]] },
  { n: "垂直线", b: "M9.500 3v14", d: [[9, 9]] },
  { n: "数字", b: "M3.500 6v10M3 16.500h14", d: [[4, 16]], x: <text x="5" y="13" fontSize="8" fill="#0000ff">123</text> },
  { n: "平行线", b: "M2 10L9 3M3 17L16 4M11 17l6-6", d: [[6, 13], [13, 6]] },
  { n: "通道线", b: "M2 10L9 3M3 17L16 4", k: "M12 12l5-5", d: [[5, 14], [13, 7]] },
  { n: "平行段", b: "M3 9l6-6M4 16L16 5", d: [[5, 14], [12, 8]] },
  { n: "圆弧", b: "M5 4q10 0 10 6t-8 6", d: [[15, 10]] },
  { n: "圆", k: "M10 3a7 7 0 1 0 .1 0z", b: "M10 10l4-4", d: [[10, 10]] },
  { n: "外接圆", k: "M10 3a7 7 0 1 0 .1 0z", b: "M4 6l12 2-6 8z", d: [[4, 6], [15, 8]] },
  { n: "W形", b: "M3 4l3 12 4-11", k: "M9 5l3 11 4-12" },
  { n: "三浪", b: "M3 16l2-5 2 4 3-11 2 10", k: "M12 14l2-5 3 7" },
  { n: "五浪", b: "M3 16l4-5 2 2 4-6", k: "M13 8l1 2 3-6" },
  { n: "N形", b: "M3 4l5 11 4-8", k: "M12 7l4 10" },
  { n: "头肩", b: "M3 16l2-5 2 1", k: "M7 12l3-8 3 7 2-2 2 5" },
  { n: "GP", g: "M3 12.500h14", b: "M3 16.500h14", k: "M15 4.500h2", x: textTag("GP") },
  { n: "GA", g: "M3 12.500h14", b: "M3 16.500h14", k: "M15 4.500h2", x: textTag("GA") },
  { n: "G", g: "M3 12.500h14", b: "M3 16.500h14", k: "M11 4.500h6", x: textTag("G") },
  { n: "百分比", g: "M10 8.500h7M3 12.500h14", b: "M3 16.500h14", k: "M3 4.500h14", x: <text x="3" y="12" fontSize="8" fill="#0000ff" fontWeight="bold">%</text> },
  { n: "阻速", g: "M12 8.500h5M3 12.500h14", b: "M3 16.500h14", k: "M3 4.500h14", x: <text x="4" y="12" fontSize="8" fill="#0000ff" fontWeight="bold">T</text> },
  { n: "回归带", k: "M3.500 5v12M16.500 3v12M3 12l13-5", b: "M3 8l13-5M3 17l13-5" },
  { n: "回归通道", k: "M3.500 5v12M16.500 3v12M3 12l14-6", b: "M3 8l14-6M3 17l14-6" },
  { n: "回归线", k: "M3.500 3v14M16.500 3v14", b: "M3 14l13-6" },
  { n: "周期线", k: "M3.500 3v14M7.500 3v14M11.500 3v14M15.500 3v14" },
  { n: "斐波线", k: "M15.500 3v14", b: "M3.500 3v14M6.500 3v14M10.500 3v14" },
  { n: "江恩时间", k: "M3.500 3v14M16.500 3v14", g: "M7.500 3v14", x: <text x="9" y="11" fontSize="8" fill="#0000ff" fontWeight="bold">G</text> },
  { n: "等周期", k: "M4.500 3v14M8.500 3v14M13.500 3v14M17.500 3v14", b: "M2.500 3v14" },
  { n: "阴阳线", k: "M12.500 3v14M17.500 3v14", b: "M3.500 3v14M5.500 3v14M6.500 3v14M9.500 3v14" },
  { n: "螺旋", k: "M6.500 7v10M8.500 3v14M10.500 3v14M12.500 3v14M17.500 3v14", b: "M2.500 3v14" },
  { n: "速阻扇", k: "M3 16l13-11M3 16h13M3 16l13-5", b: "M6 12l9-9", g: "M3 16l14-8" },
  { n: "江恩扇", k: "M3.500 3v14M3 16.500h14", b: "M4 16L8 4M4 16L16 3M4 16l13-8M4 16l13-4" },
  { n: "三叉", k: "M10 4v12M10 16L4 9", b: "M10 16l7-6" },
  { n: "三角", b: "M3 7l14-3-8 13z", d: [[3, 6], [15, 4], [9, 16]] },
  { n: "矩形", b: "M4 5h12v10H4z", d: [[16, 14]] },
  { n: "红箭头", x: <path d="M10 4l4 5h-3v6H9V9H6z" fill="#ff0000" /> },
  { n: "绿箭头", x: <path d="M10 16l4-5h-3V5H9v6H6z" fill="#008000" /> },
  { n: "标线", b: "M3 16L14 4", k: "M3 16l3-3", x: <path d="M13 9l4 5h-3v3h-2v-3h-3z" fill="#ff0000" /> },
  { n: "文字", x: <text x="10" y="15" fontSize="13" fontWeight="bold" textAnchor="middle" fill="#000">A</text> },
  { n: "加文字", x: <><text x="10" y="16" fontSize="13" fontWeight="bold" textAnchor="middle" fill="#000">A</text><path d="M3 5h5M5.500 3v5" stroke="#000" /></> },
  { n: "方块", x: <><path d="M4.500 4.500h11v11h-11z" fill="none" stroke="#909090" /><path d="M6 6h8v8H6z" fill="#a0a0a0" /></> },
  { n: "删除", r: "M5 5l10 10M15 5L5 15" },
  { n: "隐藏", g: "M4 9.500h5v6H4zM9 10l8 7", x: <circle cx="14" cy="7" r="3" fill="#ffff00" stroke="#808000" strokeWidth="0.500" /> },
  { n: "清单", k: "M4.500 3.500h11v13h-11z", b: "M7 6.500h7M7 9.500h7M7 12.500h7M7 14.500h7" },
  { n: "标尺", k: "M4 14.500h12M3.500 7v8M16.500 7v8", b: "M3 6.500h14M6.500 7v3M9.500 7v3M12.500 7v3" },
  { n: "图片", k: "M4.500 5.500h12v9h-12z", x: <path d="M6 7h5v6H6z" fill="#008080" />, g: "M12 8.500h3M12 11.500h3" },
  { n: "轨迹", k: "M3 16c3-1 4-11 7-11s4 8 7 10M6 16l4-7 2 2" },
  { n: "上", r: "M10 4v11M10 9h5M4 15.500h13" },
  { n: "下", e: "M4 4.500h12M10 5v11M10 9l4 3" },
  { n: "多空", x: <><path d="M10 3l4 4H6z" fill="#ff0000" /><path d="M10 7l4 4H6z" fill="#f0d000" /><path d="M10 11l4 5H6z" fill="#008000" /></> },
  { n: "" },
];

function Palette() {
  return (
    <div className="absolute top-[71px] right-[90px] w-[92px] border-t border-[#404040] bg-white">
      <div className="flex h-[30px] items-center justify-end pr-px pt-1">
        <button className="h-[19px] w-[19px] bg-[#c75050] text-[10px] font-bold text-white">x</button>
      </div>
      <div className="grid grid-cols-4">
        {palette.map((p, i) => (
          <button key={i} aria-label={p.n} className="flex h-[22px] items-center justify-center">
            <svg className="h-5 w-5" viewBox="0 0 20 20" fill="none">
              <path d={p.g} stroke="#a0a0a0" />
              <path d={p.b} stroke="#0000ff" />
              <path d={p.k} stroke="#000" />
              <path d={p.r} stroke="#ff0000" strokeWidth={1.5} />
              <path d={p.e} stroke="#008000" strokeWidth={1.5} />
              {p.x}
              {p.d?.map(([x, y]) => <rect key={`${x}-${y}`} x={x - 1} y={y - 1} width={3} height={3} fill="#000" />)}
            </svg>
          </button>
        ))}
        {["买", "卖", "平"].map((t) => (
          <button key={t} className="h-[22px] text-[12px] text-[#a0a0a0]">{t}</button>
        ))}
      </div>
    </div>
  );
}

const arrows: [number, number, number, number][] = [
  [872, 97, 1001, 308],
  [1018, 299, 1071, 197],
  [1072, 197, 1285, 479],
  [1292, 479, 1381, 319],
  [1261, 307, 1636, 312],
  [1409, 335, 1555, 452],
  [1555, 452, 1587, 384],
  [1587, 384, 1663, 435],
  [1663, 435, 1706, 295],
];

// tapered arrow, thin at the tail
function arrowPath([x1, y1, x2, y2]: [number, number, number, number]) {
  const len = Math.hypot(x2 - x1, y2 - y1);
  const ux = (x2 - x1) / len;
  const uy = (y2 - y1) / len;
  const pt = (along: number, side: number) =>
    `${(x1 + ux * along - uy * side).toFixed(1)},${(y1 + uy * along + ux * side).toFixed(1)}`;
  const neck = len - 21;
  const wing = len - 25;
  return [pt(0, -1), pt(neck, -5), pt(wing, -11), pt(len, 0), pt(wing, 11), pt(neck, 5), pt(0, 1)].join(" ");
}

function Annotations() {
  return (
    <svg className="pointer-events-none absolute inset-0 h-full w-full">
      <ellipse cx={1453} cy={398} rx={277} ry={145} fill="none" stroke={YELLOW} strokeWidth={7} />
      {arrows.map((a, i) => <polygon key={i} points={arrowPath(a)} fill="#f21af2" />)}
    </svg>
  );
}

function TitleStrip() {
  return (
    <div className="flex h-2 shrink-0 justify-between overflow-hidden border-b border-[#707070] bg-gradient-to-b from-[#dedede] to-[#d0d0d0]">
      <svg className="h-2 w-[24px]" viewBox="0 0 24 8">
        <path d="M4 0h14q-3 4-8 4-4 0-6-4z" fill="#1c5a94" />
        <path d="M13 0h6q-2 4-6 5 2-2 0-5z" fill="#d03030" />
      </svg>
      <svg className="h-2 w-[320px]" viewBox="0 0 320 8">
        <path d="M0 1h14" stroke="#444" strokeWidth="2" />
        <path d="M53 .5h26M95 .5h26M141 .5h26M185 .5h30" stroke="#333" strokeDasharray="4 2 2 3" />
        <g fill="#f4f4f4" stroke="#aaa"><circle cx="245" cy="-5" r="9" /><circle cx="275" cy="-5" r="9" /><circle cx="305" cy="-5" r="9" /></g>
      </svg>
    </div>
  );
}

export default function App() {
  return (
    <div className={`relative flex h-screen flex-col overflow-hidden bg-black text-[12px] leading-none ${FONT}`}>
      <TitleStrip />
      <div className="flex min-h-0 flex-1">
        <main className="flex min-w-0 flex-1 flex-col">
          <Toolbar />
          <PricePanel />
          <VolumePanel />
          <MacdPanel />
          <DateAxis />
        </main>
        <QuotePanel />
        <InfoPanel />
        <SideBar />
      </div>
      <Annotations />
      <Palette />
      {/* Watermark */}
      <div className="pointer-events-none absolute right-[16px] bottom-[16px] flex items-center gap-[8px] text-white/90">
        <FaWeibo className="h-[66px] w-[66px] drop-shadow-[1px_1px_1px_#000]" />
        <span className="font-['Noto_Sans_CJK_SC',sans-serif] text-[50px] leading-[66px] text-white [text-shadow:1px_1px_2px_#000]">@遂昌快活林</span>
      </div>
    </div>
  );
}
